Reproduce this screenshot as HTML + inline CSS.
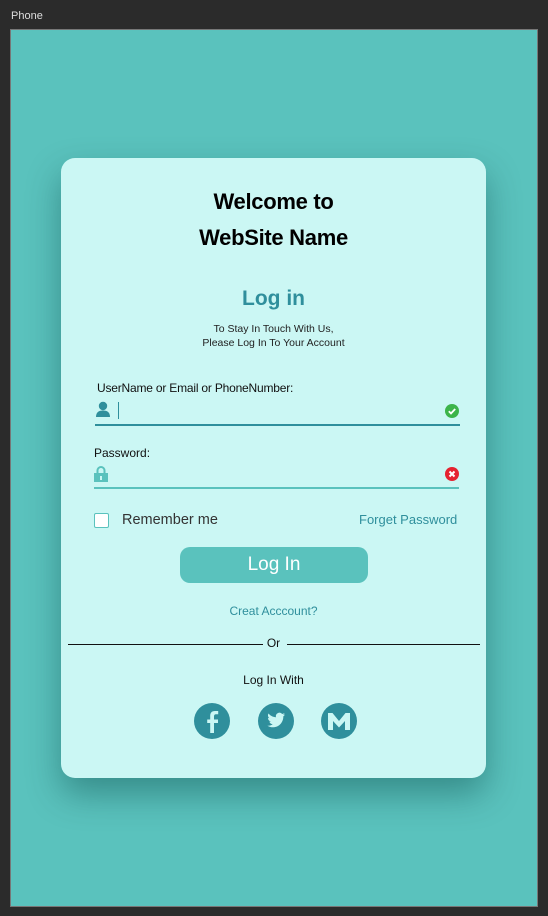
<!DOCTYPE html>
<html><head><style>
*{margin:0;padding:0;box-sizing:border-box}
body{width:548px;height:916px;background:#2b2b2b;font-family:"Liberation Sans",sans-serif;position:relative;overflow:hidden}
.t{position:absolute}
#top{left:11px;top:10px;color:#ddd;font-size:11px}
#phone{left:10px;top:29px;width:528px;height:878px;background:#5ac2bd;border:1px solid #777}
#card{left:61px;top:158px;width:425px;height:620px;background:#cbf7f4;border-radius:14px;box-shadow:0 16px 34px rgba(0,60,60,.4)}
.c{left:61px;width:425px;text-align:center}
.line{position:absolute;height:2px}
</style></head><body>
<div class="t" id="top">Phone</div>
<div class="t" id="phone"></div>
<div class="t" id="card"></div>
<div class="t c" style="top:184px;font-size:22px;font-weight:bold;line-height:36px;color:#000;letter-spacing:-0.3px">Welcome to<br>WebSite Name</div>
<div class="t c" style="top:287px;font-size:21px;font-weight:bold;color:#2f8f9c">Log in</div>
<div class="t c" style="top:322px;font-size:10.5px;line-height:14px;color:#222">To Stay In Touch With Us,<br>Please Log In To Your Account</div>
<div class="t" style="left:97px;top:381px;font-size:12px;color:#111;letter-spacing:-0.2px">UserName or Email or PhoneNumber:</div>
<svg class="t" style="left:95px;top:401px" width="16" height="17"><circle cx="8" cy="5" r="4.2" fill="#2f8f9c"/><path d="M1 16 Q1 9.5 8 9.5 Q15 9.5 15 16Z" fill="#2f8f9c"/></svg>
<div class="t" style="left:118px;top:402px;width:1px;height:17px;background:#2f8f9c"></div>
<svg class="t" style="left:445px;top:404px" width="14" height="14"><circle cx="7" cy="7" r="7" fill="#3cb44a"/><path d="M3.8 7.2l2.2 2.2 4.2-4.4" stroke="#fff" stroke-width="1.8" fill="none"/></svg>
<div class="line" style="left:95px;top:424px;width:365px;background:#2f8f9c"></div>
<div class="t" style="left:94px;top:446px;font-size:12px;color:#111">Password:</div>
<svg class="t" style="left:94px;top:465px" width="14" height="17"><path d="M3.5 8V5.5a3.5 3.5 0 0 1 7 0V8" stroke="#5ac2bd" stroke-width="2" fill="none"/><rect x="0" y="8" width="14" height="9" fill="#5ac2bd"/><rect x="6" y="11" width="2" height="4" fill="#cbf7f4"/></svg>
<svg class="t" style="left:445px;top:467px" width="14" height="14"><circle cx="7" cy="7" r="7" fill="#e52330"/><path d="M4.5 4.5l5 5M9.5 4.5l-5 5" stroke="#fff" stroke-width="2"/></svg>
<div class="line" style="left:94px;top:487px;width:365px;background:#5ac2bd"></div>
<div class="t" style="left:94px;top:513px;width:15px;height:15px;border:1.5px solid #5ac2bd;background:#fff;border-radius:2px"></div>
<div class="t" style="left:122px;top:512px;font-size:14.5px;color:#333">Remember me</div>
<div class="t" style="left:359px;top:512px;font-size:13px;color:#2f8f9c">Forget Password</div>
<div class="t" style="left:180px;top:547px;width:188px;height:36px;background:#5ac2bd;border-radius:10px;color:#fff;font-size:19px;text-align:center;line-height:35px">Log In</div>
<div class="t c" style="top:604px;font-size:12px;color:#2f8f9c">Creat Acccount?</div>
<div class="line" style="left:68px;top:644px;width:195px;height:1px;background:#111"></div>
<div class="line" style="left:287px;top:644px;width:193px;height:1px;background:#111"></div>
<div class="t c" style="top:636px;font-size:12px;color:#111">Or</div>
<div class="t c" style="top:673px;font-size:12px;color:#111">Log In With</div>
<svg class="t" style="left:193px;top:702px" width="166" height="38">
<circle cx="19" cy="19" r="18" fill="#2f8f9c"/>
<path d="M21 31V21h4v-3.5h-4v-3c0-1.5.7-2.2 2-2.2h2.2V9h-3.2c-3.5 0-4.8 2-4.8 5v3.5h-3V21h3v10z" fill="#cbf7f4"/>
<circle cx="83" cy="19" r="18" fill="#2f8f9c"/>
<path d="M92 12.5c-.7.3-1.4.5-2.1.6.8-.5 1.3-1.2 1.6-2-.7.4-1.5.7-2.3.9a3.6 3.6 0 0 0-6.2 3.3c-3-.2-5.7-1.6-7.5-3.8-1 1.7-.5 3.8 1.1 4.8-.6 0-1.2-.2-1.6-.4 0 1.8 1.2 3.3 2.9 3.6-.5.2-1.1.2-1.6.1.5 1.5 1.9 2.5 3.4 2.5-1.5 1.2-3.4 1.8-5.3 1.6 1.6 1 3.5 1.6 5.5 1.6 6.7 0 10.4-5.6 10.4-10.4v-.5c.7-.5 1.3-1.1 1.8-1.9z" fill="#cbf7f4"/>
<circle cx="146" cy="19" r="18" fill="#2f8f9c"/>
<path d="M135 28V11h4.5l6.5 8 6.5-8h4.5v17h-5v-9l-6 6.5-6-6.5v9z" fill="#cbf7f4"/>
</svg>
</body></html>
